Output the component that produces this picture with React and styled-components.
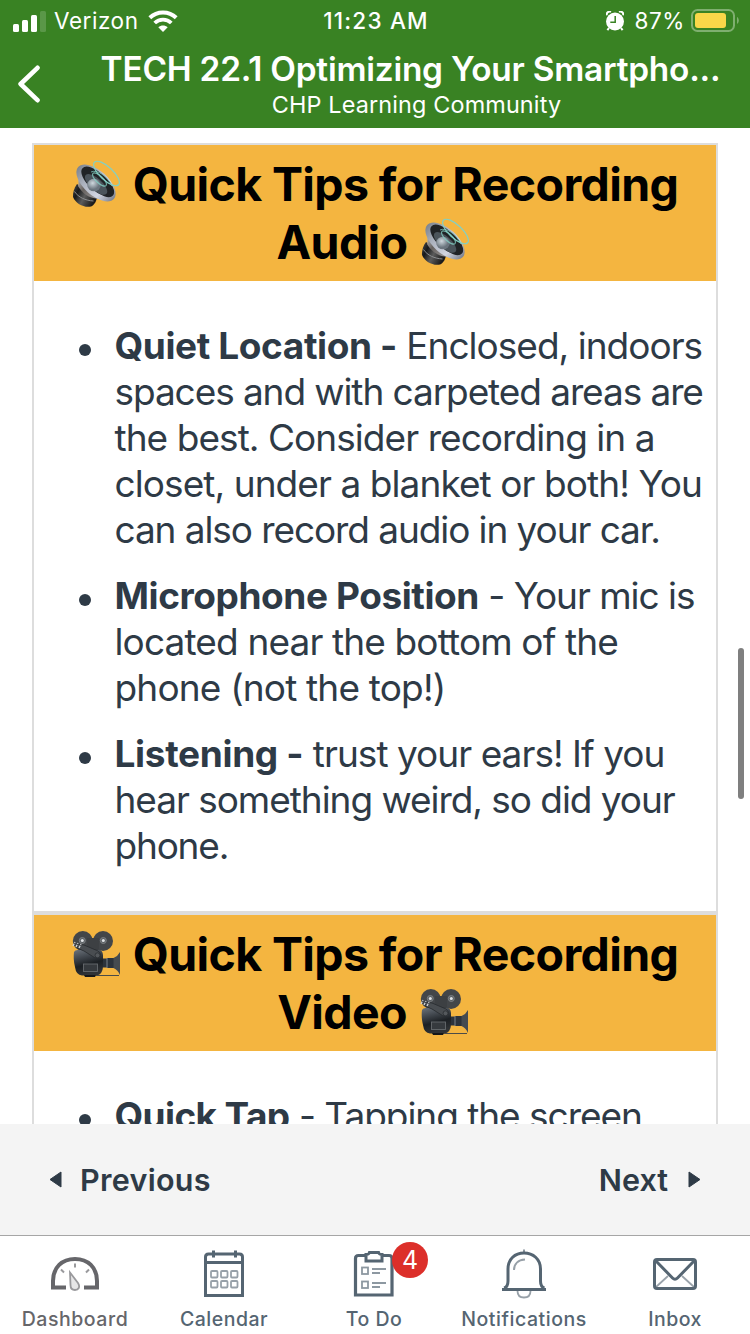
import React from "react";
import styled, { createGlobalStyle } from "styled-components";

const GlobalStyle = createGlobalStyle`
  * { box-sizing: border-box; }
  html, body { margin: 0; padding: 0; background: #fff; }
  body { font-family: Inter, "Liberation Sans", sans-serif; color: #2e3a46; overflow: hidden; }
  svg { display: block; flex: none; }
`;

const Screen = styled.div`
  width: 750px;
  height: 1334px;
  display: flex;
  flex-direction: column;
  overflow: hidden;
  background: #fff;
`;

const TopBar = styled.header`
  height: 128px;
  flex: none;
  background: #398223;
  color: #fff;
`;

const StatusBar = styled.div`
  height: 40px;
  display: grid;
  grid-template-columns: 1fr auto 1fr;
  align-items: center;
  padding: 0 11px 0 13px;
  font-size: 22.5px;
  line-height: 40px;
`;

const StatusGroup = styled.div`
  display: flex;
  align-items: center;
  height: 40px;
  justify-content: ${(p) => (p.$end ? "flex-end" : "flex-start")};
`;

const StatusText = styled.span`
  letter-spacing: ${(p) => p.$track || 0}px;
  margin: ${(p) => p.$margin || "0"};
  padding-top: 1px;
  font-weight: ${(p) => p.$weight || 400};
  white-space: nowrap;
`;

const NavBar = styled.div`
  height: 88px;
  display: flex;
  padding-left: 17px;
`;

const BackButton = styled.button`
  border: 0;
  padding: 25px 0 0;
  width: 66px;
  background: none;
  display: flex;
  align-items: flex-start;
`;

const TitleBlock = styled.div`
  flex: 1;
  display: flex;
  flex-direction: column;
  align-items: center;
  padding: 8px 0 0;
  white-space: nowrap;
`;

const Title = styled.h1`
  margin: 0 12px 0 0;
  font-size: 33.4px;
  line-height: 42px;
  font-weight: 600;
  letter-spacing: ${(p) => p.$track}px;
`;

const Subtitle = styled.div`
  font-size: 23.4px;
  line-height: 30px;
  letter-spacing: ${(p) => p.$track}px;
`;

const Content = styled.main`
  flex: 1;
  min-height: 0;
  overflow: hidden;
  padding: 15px 32px 0;
  position: relative;
`;

const ScrollThumb = styled.div`
  position: absolute;
  right: 6px;
  top: 520px;
  width: 6px;
  height: 151px;
  border-radius: 3px;
  background: #7f7f7f;
`;

const TipCard = styled.section`
  border: 2px solid #dddddd;
  height: ${(p) => p.$height}px;
`;

const TipHeading = styled.h2`
  margin: 0;
  padding: 10px 0;
  height: 136px;
  background: #f4b540;
  color: #000;
  font-size: 46.5px;
  font-weight: 700;
`;

const HeadingLine = styled.span`
  display: flex;
  justify-content: center;
  align-items: center;
  height: 58px;
  line-height: 58px;
  gap: 13px;
  padding-right: ${(p) => p.$shift || 0}px;
  white-space: nowrap;
  letter-spacing: -0.62px;
`;

const TipList = styled.ul`
  list-style: none;
  margin: 0;
  padding: 42px 0 0 80.5px;
  display: flex;
  flex-direction: column;
  gap: 20px;
`;

const Tip = styled.li`
  position: relative;
  font-size: 37px;
  line-height: 46px;

  &::before {
    content: "";
    position: absolute;
    left: -35.5px;
    top: 21px;
    width: 12px;
    height: 12px;
    border-radius: 50%;
    background: #2e3a46;
  }
`;

const Line = styled.span`
  display: block;
  white-space: nowrap;
  letter-spacing: ${(p) => p.$track || -0.95}px;
`;

const Strong = styled.strong`
  font-weight: 700;
  letter-spacing: ${(p) => p.$track || -0.4}px;
`;

const Pager = styled.nav`
  height: 111px;
  flex: none;
  background: #f4f4f4;
  display: flex;
  justify-content: space-between;
  align-items: center;
  padding: 0 49px 0 49px;
`;

const PagerButton = styled.button`
  border: 0;
  padding: 0;
  background: none;
  color: #2e3a46;
  display: flex;
  align-items: center;
  gap: ${(p) => p.$gap}px;
  font: 600 30.5px/40px Inter, "Liberation Sans", sans-serif;
  letter-spacing: ${(p) => p.$track || 0}px;
`;

const TabBar = styled.nav`
  height: 99px;
  flex: none;
  border-top: 1px solid #a6a6a6;
  background: #fff;
  display: grid;
  grid-template-columns: repeat(5, 150px);
`;

const Tab = styled.a`
  position: relative;
  display: flex;
  flex-direction: column;
  align-items: center;
  padding: 13px ${(p) => (p.$nudge ? 2 : 0)}px 0 0;
  color: ${(p) => (p.$active ? "#66666a" : "#556572")};
  font-size: 19.5px;
  font-weight: 500;
  line-height: 26px;
`;

const TabLabel = styled.span`
  margin-top: 7px;
  white-space: nowrap;
  letter-spacing: ${(p) => p.$track}px;
`;

const Badge = styled.span`
  position: absolute;
  left: 92px;
  top: 6px;
  width: 36px;
  height: 36px;
  border-radius: 50%;
  background: #dc2f2a;
  color: #fff;
  font-size: 25px;
  font-weight: 400;
  line-height: 36px;
  text-align: center;
`;

const SignalIcon = () => (
  <svg width="33" height="22" viewBox="0 0 33 22" fill="#fff">
    <rect x="0" y="14" width="6" height="8" rx="1.5" />
    <rect x="9" y="10" width="6" height="12" rx="1.5" />
    <rect x="18" y="5" width="6" height="17" rx="1.5" />
    <rect x="27" y="1" width="6" height="21" rx="1.5" opacity=".17" />
  </svg>
);

const WifiIcon = () => (
  <svg width="30" height="22" viewBox="0 0 30 22">
    <path d="M1.8 7.8A19 19 0 0 1 28.2 7.8" fill="none" stroke="#fff" strokeWidth="4" />
    <path d="M6.7 13A12 12 0 0 1 23.3 13" fill="none" stroke="#fff" strokeWidth="3.8" />
    <path d="M15 22 10.3 17.2C13 15 17 15 19.7 17.2Z" fill="#fff" />
  </svg>
);

const AlarmIcon = () => (
  <svg width="18" height="20" viewBox="0 0 18 20">
    <circle cx="9" cy="10.5" r="9" fill="#fff" />
    <path d="M.8 4.2C.2 1.6 2.8-.2 5 .9M17.2 4.2C17.8 1.6 15.2-.2 13 .9" stroke="#fff" strokeWidth="2" fill="none" />
    <path d="m3 17-1.6 2.2M15 17l1.6 2.2" stroke="#fff" strokeWidth="2" />
    <path d="M9.2 5v6.2H4.3" fill="none" stroke="#398223" strokeWidth="1.5" />
  </svg>
);

const BatteryIcon = () => (
  <svg width="48" height="23" viewBox="0 0 48 23">
    <rect x="1" y="1" width="42" height="21" rx="5.5" fill="none" stroke="#7faf70" strokeWidth="2" />
    <rect x="4" y="4" width="31" height="15" rx="3" fill="#f9d749" />
    <path d="M46 8c2.4 1.3 2.4 5.8 0 7Z" fill="#7faf70" />
  </svg>
);

const BackIcon = () => (
  <svg width="24" height="38" viewBox="0 0 24 38">
    <path d="M20.5 2.8 3.6 19l16.900 16.200" fill="none" stroke="#fff" strokeWidth="4.6" strokeLinecap="round" strokeLinejoin="round" />
  </svg>
);

const SpeakerIcon = ({ id }) => (
  <svg width="48" height="48" viewBox="0 0 48 48">
    <defs>
      <linearGradient id={id + "b"} x1="0" y1="0" x2="1" y2=".5">
        <stop offset="0" stopColor="#4a4d50" />
        <stop offset=".3" stopColor="#17191b" />
        <stop offset=".6" stopColor="#5b5b5b" />
        <stop offset="1" stopColor="#1b1b1b" />
      </linearGradient>
      <linearGradient id={id + "n"} x1="0" y1="0" x2="1" y2=".6">
        <stop offset="0" stopColor="#c4c4c6" />
        <stop offset=".4" stopColor="#67625f" />
        <stop offset="1" stopColor="#a5a3a5" />
      </linearGradient>
      <linearGradient id={id + "r"} x1="0" y1="0" x2="1" y2="0">
        <stop offset="0" stopColor="#7d8490" />
        <stop offset=".3" stopColor="#aab0bc" />
        <stop offset=".7" stopColor="#d2d6e2" />
        <stop offset="1" stopColor="#7c8290" />
      </linearGradient>
      <radialGradient id={id + "c"} cx=".4" cy=".35">
        <stop offset="0" stopColor="#cfd8de" />
        <stop offset="1" stopColor="#6b757e" />
      </radialGradient>
    </defs>
    <path d="M5 24C2 28 .7 33 1 37c3 7 11 11 18 9.500 3-1.500 5-4 6-9Z" fill={`url(#${id}b)`} />
    <path d="M6 15c0 5 1 8 0 11 4 7 11 12 18 12.500l10 1.500Z" fill={`url(#${id}n)`} />
    <path d="M2.500 31.500c4 6 11 9 19 9.500" fill="none" stroke="#8c8e90" strokeWidth="1" />
    <g transform="rotate(42 24 23)">
      <ellipse cx="24" cy="23" rx="24" ry="12.300" fill={`url(#${id}r)`} />
      <ellipse cx="24.500" cy="21" rx="20.500" ry="9" fill="#202326" />
      <ellipse cx="25" cy="24" rx="14" ry="6" fill="#4b545b" />
    </g>
    <ellipse cx="22" cy="25" rx="6.800" ry="6.300" fill={`url(#${id}c)`} />
    <g fill="none" stroke="#83d0c4" strokeWidth="1.200">
      <ellipse cx="34.500" cy="13.500" rx="16.500" ry="6.500" transform="rotate(43 34.500 13.500)" />
      <ellipse cx="27.500" cy="19.500" rx="9" ry="3.500" transform="rotate(43 27.500 19.500)" opacity=".8" />
    </g>
    <path d="M19 12c6-3 16 4 21 14" fill="none" stroke="#83d0c4" strokeWidth="1" opacity=".75" />
  </svg>
);

const CameraIcon = ({ id }) => (
  <svg width="48" height="48" viewBox="0 0 48 48">
    <defs>
      <linearGradient id={id + "g"} x1="0" y1="0" x2=".3" y2="1">
        <stop offset="0" stopColor="#6c737b" />
        <stop offset=".3" stopColor="#464c53" />
        <stop offset=".65" stopColor="#1c2024" />
        <stop offset="1" stopColor="#303336" />
      </linearGradient>
    </defs>
    <path d="M9 15h24l-5 6-16-1Z" fill="#3a3d40" />
    <circle cx="10.800" cy="11" r="10" fill="#434649" />
    <circle cx="31" cy="11" r="10" fill="#434649" />
    <path d="M15 8h12v11H15Z" fill="#3d4043" />
    {[10.300, 31.300].map((x) => (
      <g key={x}>
        <circle cx={x} cy="10.500" r="3" fill="#5b6064" stroke="#7b7f82" strokeWidth="1" />
        <circle cx={x} cy="10.500" r="1.500" fill="#dfe2e5" />
      </g>
    ))}
    <path d="M2 22q1-2 3.500-2H27q3.500 0 4 5v12q-.5 7-6 8.500H10Q4 45 3 37C1.500 31 1.500 26 2 22Z" fill={`url(#${id}g)`} />
    <path d="m5 14 7 1 14 6q4 3 1.500 6-2 1.500-5 .5L12 21l-7-3Z" fill="#494d51" stroke="#272b2e" strokeWidth=".8" />
    <path d="m1 16 2-4m1 5 2-4m1 5 2-4" stroke="#d5d7da" strokeWidth="1.300" strokeDasharray="2.500 1" />
    <circle cx="25.500" cy="25.300" r="2.500" fill="#54585c" stroke="#303438" strokeWidth="1" />
    <rect x="11.500" y="34" width="14" height="7.500" fill="#363a3e" stroke="#666a6e" strokeWidth=".9" />
    <path d="M31 28.500h4V28h7v10h-7v-.5h-4Z" fill="#2c333b" />
    <path d="M35 28v10" stroke="#7b848c" strokeWidth="1" />
    <path d="M48 22v23q-2-5-6.500-7V28q4.500-2 6.500-6Z" fill="#454b50" />
    <path d="M12 45h12l-1 2H13Z" fill="#151719" />
    <path d="M24 45.500h23" stroke="#4a4b48" strokeWidth="1" />
  </svg>
);

const Triangle = ({ right }) => (
  <svg width="13" height="17" viewBox="0 0 13 17">
    <path d={right ? "M1 1v15L12 8.500Z" : "M12 1v15L1 8.500Z"} fill="#2e3a46" stroke="#2e3a46" strokeWidth="1" strokeLinejoin="round" />
  </svg>
);

const DashboardIcon = () => (
  <svg width="50" height="50" viewBox="0 0 50 50" fill="none">
    <path d="M16 38.500H3V32C3 18.500 12 10 25 10s22 8.500 22 22v6.500H34" stroke="#66666a" strokeWidth="4" />
    <path d="M25 14.500v4M11 20.500l3 3M39 20.500l-3 3" stroke="#99999c" strokeWidth="2" />
    <path d="m20 23.500 8 10.500c2.500 4 .5 7-3 7-2.800 0-4.500-2-4.500-5Z" fill="#e6e6e7" stroke="#99999c" strokeWidth="1.800" />
  </svg>
);

const CalendarIcon = () => (
  <svg width="50" height="50" viewBox="0 0 50 50" fill="none" stroke="#556572">
    <path d="M6.500 46.500V8q0-3 3-3h31q3 0 3 3v38.500ZM6 13.500h38M14.500 1.500v7M36.500 1.500v7" strokeWidth="3" />
    {[22, 32].map((y) => [12, 22, 32].map((x) => (
      <rect key={x + "-" + y} x={x} y={y} width="6.500" height="6.500" rx="1" stroke="#97a0a8" strokeWidth="1.800" />
    )))}
  </svg>
);

const TodoIcon = () => (
  <svg width="50" height="50" viewBox="0 0 50 50" fill="none" stroke="#556572">
    <path d="M16 6.500H9q-3 0-3 3V46h36.500V9.500q0-3-3-3h-7" transform="translate(.5 0)" strokeWidth="3.200" />
    <path d="M16.500 5.500q3 0 3.500-2h9q.5 2 3.500 2V12h-16Z" transform="translate(.5 0)" strokeWidth="3" />
    <g stroke="#8d98a1" strokeWidth="1.800">
      <rect x="13" y="18.500" width="6" height="6.500" />
      <rect x="13" y="32.500" width="6" height="6.500" />
      <path d="M23 20h14M23 24h8M23 34h14M23 38h8" />
    </g>
  </svg>
);

const BellIcon = () => (
  <svg width="50" height="50" viewBox="0 0 50 50" fill="none" stroke="#556572">
    <path d="M25 .5v3" stroke="#8d98a1" strokeWidth="2" />
    <path d="M3 40.500h44" strokeWidth="3" />
    <path d="M5 39q4-1 4-7V20C9 10 16 4 25 4s16.500 6 16.500 16v12q0 6 4 7" strokeWidth="3" />
    <path d="M15 21c0-6 4-10 11-10.500" stroke="#97a0a8" strokeWidth="2" />
    <path d="M18.500 42q0 6.500 6.500 6.500t6.500-6.500" stroke="#97a0a8" strokeWidth="1.800" />
  </svg>
);

const InboxIcon = () => (
  <svg width="50" height="50" viewBox="0 0 50 50" fill="none" stroke="#556572">
    <path d="m6 38 12-11M44 38 32 27" stroke="#9aa3ab" strokeWidth="1.800" />
    <rect x="4.500" y="10.500" width="41" height="29" rx="2.500" strokeWidth="3" />
    <path d="m5.500 11.500 17 17.500q2.500 2.500 5 0l17-17.500" strokeWidth="3" />
  </svg>
);

const tabs = [
  { label: "Dashboard", Icon: DashboardIcon, active: true, track: 0.55 },
  { label: "Calendar", Icon: CalendarIcon, track: 0.5, nudge: true },
  { label: "To Do", Icon: TodoIcon, badge: "4", track: 0.45, nudge: true },
  { label: "Notifications", Icon: BellIcon, track: 0.55, nudge: true },
  { label: "Inbox", Icon: InboxIcon, track: 0.45 },
];

export default function App() {
  return (
    <Screen>
      <GlobalStyle />
      <TopBar>
        <StatusBar>
          <StatusGroup>
            <SignalIcon />
            <StatusText $margin="0 0 0 8px" $track={0.55}>Verizon</StatusText>
            <StatusText $margin="0 0 0 9px"><WifiIcon /></StatusText>
          </StatusGroup>
          <StatusText $weight={550} $track={1.2}>11:23 AM</StatusText>
          <StatusGroup $end>
            <AlarmIcon />
            <StatusText $margin="0 6px 0 10px" $track={0.6}>87%</StatusText>
            <BatteryIcon />
          </StatusGroup>
        </StatusBar>
        <NavBar>
          <BackButton aria-label="Back"><BackIcon /></BackButton>
          <TitleBlock>
            <Title $track={-0.23}>TECH 22.1 Optimizing Your Smartpho...</Title>
            <Subtitle $track={0.14}>CHP Learning Community</Subtitle>
          </TitleBlock>
        </NavBar>
      </TopBar>
      <Content>
        <TipCard $height={770}>
          <TipHeading>
            <HeadingLine><SpeakerIcon id="s1" />Quick Tips for Recording</HeadingLine>
            <HeadingLine $shift={5}>Audio<SpeakerIcon id="s2" /></HeadingLine>
          </TipHeading>
          <TipList>
            <Tip>
              <Line $track={-0.98}><Strong>Quiet Location -</Strong> Enclosed, indoors</Line>
              <Line $track={-1.08}>spaces and with carpeted areas are</Line>
              <Line $track={-0.94}>the best. Consider recording in a</Line>
              <Line $track={-0.92}>closet, under a blanket or both! You</Line>
              <Line $track={-1.08}>can also record audio in your car.</Line>
            </Tip>
            <Tip>
              <Line $track={-1.03}><Strong $track={-0.42}>Microphone Position</Strong> - Your mic is</Line>
              <Line $track={-0.86}>located near the bottom of the</Line>
              <Line $track={-0.82}>phone (not the top!)</Line>
            </Tip>
            <Tip>
              <Line $track={-0.96}><Strong $track={-0.33}>Listening -</Strong> trust your ears! If you</Line>
              <Line $track={-1.04}>hear something weird, so did your</Line>
              <Line $track={-1.2}>phone.</Line>
            </Tip>
          </TipList>
        </TipCard>
        <TipCard $height={400}>
          <TipHeading>
            <HeadingLine><CameraIcon id="c1" />Quick Tips for Recording</HeadingLine>
            <HeadingLine $shift={5}>Video<CameraIcon id="c2" /></HeadingLine>
          </TipHeading>
          <TipList>
            <Tip>
              <Line $track={-1.03}><Strong $track={-0.62}>Quick Tap</Strong> - Tapping the screen</Line>
            </Tip>
          </TipList>
        </TipCard>
        <ScrollThumb />
      </Content>
      <Pager>
        <PagerButton $gap={18} $track={0.3}><Triangle />Previous</PagerButton>
        <PagerButton $gap={20}>Next<Triangle right /></PagerButton>
      </Pager>
      <TabBar>
        {tabs.map(({ label, Icon, active, badge, track, nudge }) => (
          <Tab key={label} $active={active} $nudge={nudge}>
            <Icon />
            <TabLabel $track={track}>{label}</TabLabel>
            {badge && <Badge>{badge}</Badge>}
          </Tab>
        ))}
      </TabBar>
    </Screen>
  );
}
